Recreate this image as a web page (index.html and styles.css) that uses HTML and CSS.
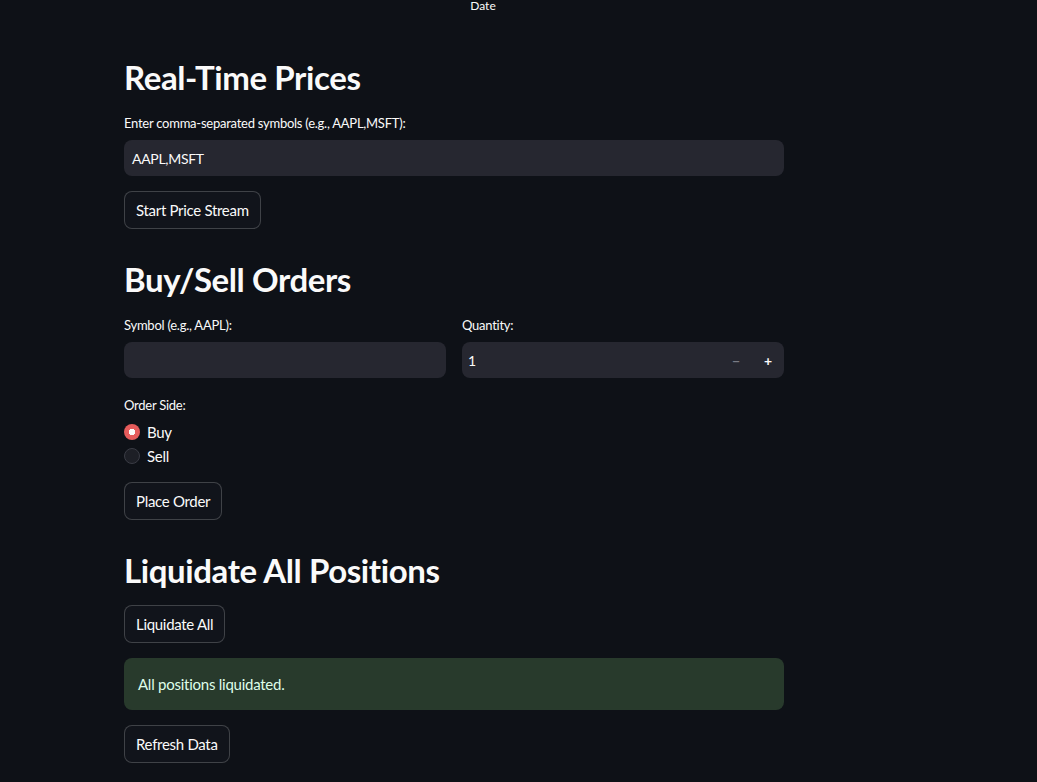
FILE: index.html
```html
<!DOCTYPE html>
<html>
<head>
<meta charset="utf-8">
<link rel="stylesheet" href="styles.css">
</head>
<body>
<div class="app">
  <div class="axis-label">Date</div>
  <main class="main">
    <h2 class="heading h-first">Real-Time Prices</h2>
    <label class="label">Enter comma-separated symbols (e.g., AAPL,MSFT):</label>
    <div class="input">AAPL,MSFT</div>
    <button class="btn">Start Price Stream</button>

    <h2 class="heading">Buy/Sell Orders</h2>
    <div class="cols">
      <div class="col">
        <label class="label">Symbol (e.g., AAPL):</label>
        <div class="input"></div>
      </div>
      <div class="col">
        <label class="label">Quantity:</label>
        <div class="input number">
          <span class="num-val">1</span>
          <span class="steppers">
            <span class="step minus">&minus;</span>
            <span class="step plus">+</span>
          </span>
        </div>
      </div>
    </div>
    <label class="label label-radio">Order Side:</label>
    <div class="radios">
      <div class="radio"><span class="dot checked"></span><span>Buy</span></div>
      <div class="radio"><span class="dot"></span><span>Sell</span></div>
    </div>
    <button class="btn btn-after-radio">Place Order</button>

    <h2 class="heading">Liquidate All Positions</h2>
    <button class="btn btn-first">Liquidate All</button>
    <div class="alert">All positions liquidated.</div>
    <button class="btn">Refresh Data</button>
  </main>
</div>
</body>
</html>
```

FILE: styles.css
```css
* { box-sizing: border-box; }
html, body {
  margin: 0;
  padding: 0;
  background: #0e1117;
  color: #fafafa;
  font-family: Lato, "Noto Sans", sans-serif;
  height: 100%;
  overflow: hidden;
}
.app {
  width: 1037px;
  height: 782px;
}
.axis-label {
  font-size: 12px;
  text-align: center;
  width: 60px;
  margin-left: 453px;
  line-height: 11px;
  height: 12px;
  color: #fafafa;
}
.main {
  width: 660px;
  margin-left: 124px;
  display: flex;
  flex-direction: column;
  align-items: flex-start;
}
.heading {
  font-size: 33px;
  font-weight: 700;
  line-height: 40px;
  padding: 0;
  margin: 30px 0 15px;
  letter-spacing: -0.4px;
}
.h-first { margin-top: 45px; }
.label {
  font-size: 13px;
  line-height: 18px;
  margin: 2px 0 8px;
  letter-spacing: -0.25px;
  display: block;
}
.input {
  width: 100%;
  height: 36px;
  background: #262730;
  border-radius: 8px;
  font-size: 14px;
  letter-spacing: -0.3px;
  padding: 0 8px;
  display: flex;
  align-items: center;
  color: #fafafa;
}
.btn {
  margin-top: 15px;
  height: 38px;
  padding: 0 11px;
  background: #11141b;
  border: 1px solid rgba(250,250,250,0.2);
  border-radius: 8px;
  color: #fafafa;
  font-family: inherit;
  font-size: 15px;
  letter-spacing: -0.3px;
}
.btn-first { margin-top: 0; }
.btn-after-radio { margin-top: 17px; }
.cols {
  display: flex;
  gap: 16px;
  width: 100%;
}
.col { flex: 1; min-width: 0; }
.number { justify-content: space-between; padding-right: 0; }
.num-val { padding-left: 0; margin-left: -2px; }
.steppers { display: flex; height: 100%; }
.step {
  width: 32px;
  display: flex;
  align-items: center;
  justify-content: center;
  font-weight: 700;
  font-size: 14px;
}
.minus { color: #797b85; }
.plus { color: #fafafa; }
.label-radio { margin: 18px 0 9px; }
.radios { display: flex; flex-direction: column; gap: 6px; }
.radio {
  display: flex;
  align-items: center;
  gap: 7px;
  font-size: 15px;
  line-height: 18px;
  letter-spacing: -0.3px;
}
.dot {
  width: 16px;
  height: 16px;
  border-radius: 50%;
  background: #1d1f26;
  border: 1px solid #3a3c45;
  display: inline-block;
}
.dot.checked {
  border: none;
  background: radial-gradient(circle, #fafafa 0 3px, #e55b5b 3.5px);
}
.alert {
  margin-top: 15px;
  width: 100%;
  height: 52px;
  background: #283a2c;
  border-radius: 8px;
  color: #dffde9;
  font-size: 15px;
  letter-spacing: -0.25px;
  padding: 0 14px;
  display: flex;
  align-items: center;
}
```
